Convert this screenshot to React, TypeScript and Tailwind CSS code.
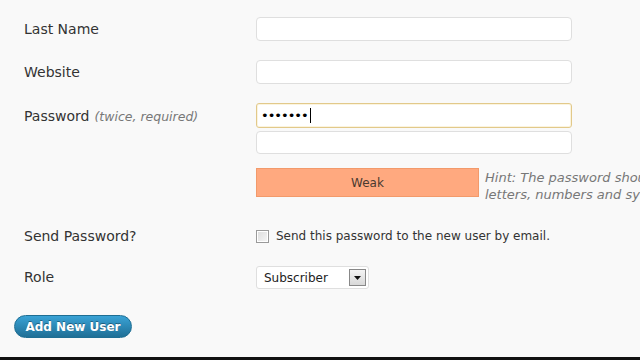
const font = { fontFamily: '"DejaVu Sans", Verdana, sans-serif' };

function TextBox({ className = "" }: { className?: string }) {
  return (
    <div
      className={`w-[316px] rounded-[4px] border border-[#dfdfdf] bg-white ${className}`}
    />
  );
}

function Row({
  label,
  note,
  className = "",
  children,
}: {
  label: string;
  note?: string;
  className?: string;
  children: React.ReactNode;
}) {
  return (
    <div className={`flex ${className}`}>
      <div className="w-[232px] shrink-0 whitespace-nowrap text-[14px] text-[#333]">
        {label}
        {note && (
          <span className="ml-[5px] text-[12.5px] italic text-[#777]">{note}</span>
        )}
      </div>
      <div className="flex flex-col">{children}</div>
    </div>
  );
}

export default function App() {
  return (
    <div
      className="flex h-[360px] w-[640px] flex-col overflow-hidden bg-[#f9f9f9]"
      style={font}
    >
      <div className="pl-[24px]">
        <Row label="Last Name" className="mt-[17px] items-center">
          <TextBox className="h-[24px]" />
        </Row>
        <Row label="Website" className="mt-[19px] items-center">
          <TextBox className="h-[24px]" />
        </Row>
        <Row
          label="Password"
          note="(twice, required)"
          className="mt-[19px] [&>div:first-child]:pt-[3px]"
        >
          <div className="flex h-[25px] w-[316px] items-center rounded-[3px] border border-[#e2c98a] bg-white pl-[4px] shadow-[inset_0_0_0_1px_#fbf4df]">
            <span className="text-[13px] leading-none tracking-[-1px] text-black">
              •••••••
            </span>
            <span className="ml-[2px] h-[15px] w-px bg-black" />
          </div>
          <TextBox className="mt-[3px] h-[23px]" />
          <div className="mt-[14px] flex h-[29px] items-start">
            <div className="flex h-[29px] w-[223px] shrink-0 items-center justify-center border border-[#f29a6b] bg-[#ffa97f] text-[12px] text-[#4a3a30]">
              Weak
            </div>
            <div className="ml-[6px] whitespace-nowrap pt-[1px] text-[13px] leading-[17px] italic text-[#777]">
              Hint: The password should be at least seven characters long. To
              make it stronger, use upper and lower case
              <br />
              letters, numbers and symbols like ! " ? $ % ^ &amp; ).
            </div>
          </div>
        </Row>
        <Row label="Send Password?" className="mt-[27px] h-[24px] items-center">
          <div className="flex items-center">
            <span className="h-[13px] w-[13px] border border-[#9a9a9a] bg-gradient-to-br from-[#dcdcdc] to-[#f6f6f6] shadow-[inset_0_0_0_1px_#fff]" />
            <span className="ml-[7px] text-[12px] text-[#333]">
              Send this password to the new user by email.
            </span>
          </div>
        </Row>
        <Row label="Role" className="mt-[18px] items-center">
          <div className="flex h-[23px] w-[113px] items-center justify-between rounded-[3px] border border-[#dfdfdf] bg-white pl-[7px] pr-[2px]">
            <span className="text-[12px] text-[#222]">Subscriber</span>
            <span className="flex h-[17px] w-[17px] items-center justify-center border border-[#888] bg-gradient-to-b from-[#f4f4f4] to-[#d8d8d8]">
              <svg width="7" height="4" viewBox="0 0 7 4">
                <path d="M0 0h7L3.5 4z" fill="#111" />
              </svg>
            </span>
          </div>
        </Row>
      </div>
      <div className="mt-[26px] pl-[14px]">
        <button className="flex h-[23px] w-[118px] items-center justify-center rounded-full border border-[#1e6e93] bg-gradient-to-b from-[#3aa3d6] to-[#1f6f96] text-[12px] font-bold text-white [text-shadow:0_-1px_0_rgba(0,0,0,0.35)]">
          Add New User
        </button>
      </div>
      <div className="flex-1" />
      <div className="h-[3px] bg-[#111]" />
    </div>
  );
}
